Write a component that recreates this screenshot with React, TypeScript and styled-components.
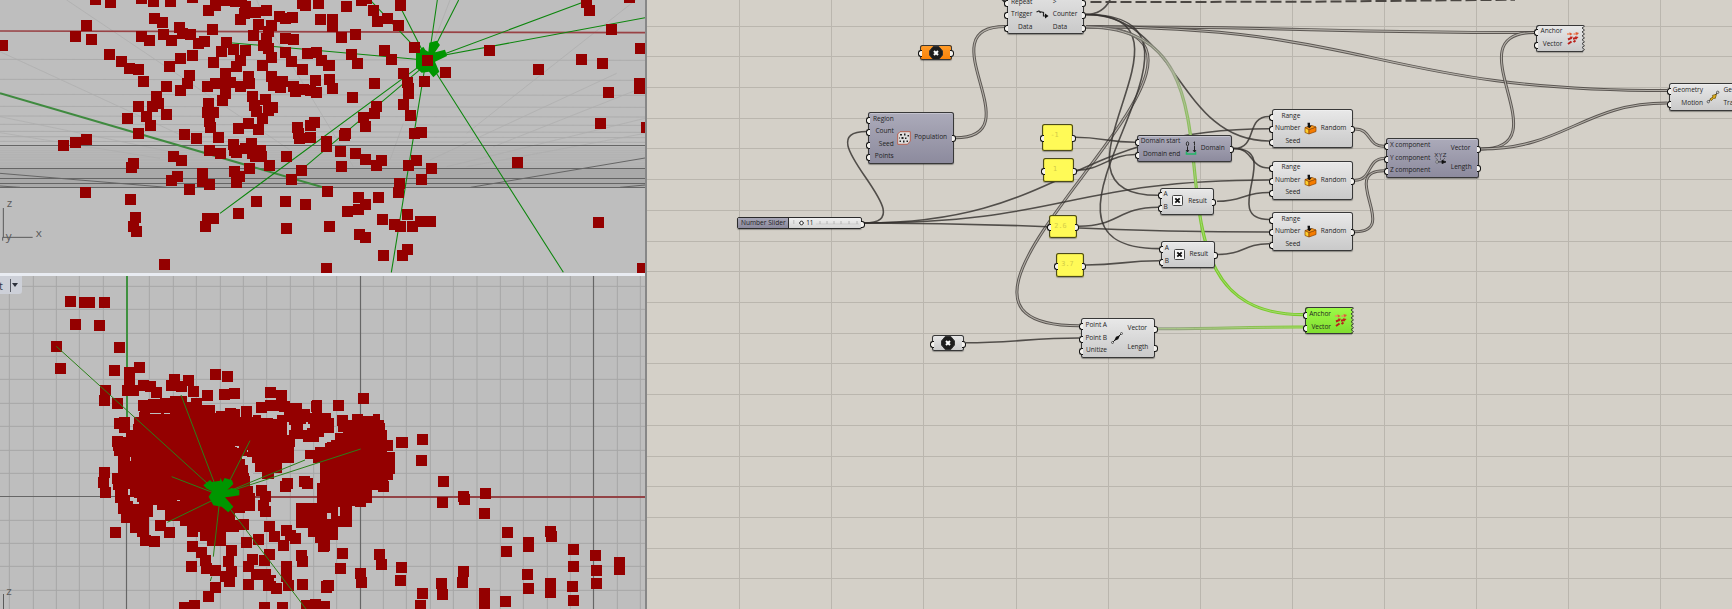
import React from 'react';
import styled, { createGlobalStyle, css } from 'styled-components';

const Global = createGlobalStyle`
  * { box-sizing: border-box; }
  html, body { margin: 0; padding: 0; overflow: hidden; }
  body { font-family: "Open Sans", "Noto Sans", sans-serif; }
`;

const Screen = styled.div`
  display: flex;
  width: 1732px;
  height: 609px;
  overflow: hidden;
  background: #d4d0c8;
`;

const Viewports = styled.div`
  display: flex;
  flex-direction: column;
  width: 647px;
  flex: none;
  border-right: 2px solid #878787;
  background: #e9ecf2;
  gap: 3px;
`;

const Viewport = styled.div<{ $h: number }>`
  position: relative;
  height: ${(p) => p.$h}px;
  flex: none;
  background: #bebebe;
  overflow: hidden;
  svg { display: block; }
`;

const ViewTag = styled.div`
  position: absolute;
  left: 0;
  top: 0;
  display: flex;
  align-items: center;
  width: 22px;
  height: 18px;
  background: #cdd0d8;
  border-radius: 0 0 3px 0;
  font-size: 11px;
  color: #333a48;
`;
const TagText = styled.span`
  width: 11px;
  margin-left: -1px;
`;
const TagArrow = styled.span`
  height: 13px;
  border-left: 1px solid #565a64;
  display: flex;
  align-items: center;
  padding-left: 1px;
  &::after {
    content: "";
    border: 3.5px solid transparent;
    border-top: 4px solid #2c303a;
    border-bottom: 0;
  }
`;

const Canvas = styled.div`
  position: relative;
  flex: 1;
  height: 609px;
  overflow: hidden;
  background: #d4d0c8;
`;

/* Origin of the canvas inside the window; node positions are in window units. */
const OX = 647;

const Wires = styled.svg`
  position: absolute;
  inset: 0;
`;

type Tone = 'plain' | 'dark' | 'green' | 'orange';
const tones: Record<Tone, string> = {
  plain: 'linear-gradient(#e9e9e9, #c9c9c9)',
  dark: 'linear-gradient(#acabba, #8c8a9d)',
  green: 'linear-gradient(#9dfb48, #80dc30)',
  orange: 'linear-gradient(#ff9c2a, #f98208)',
};

const port = css`
  content: "";
  position: absolute;
  top: 50%;
  width: 3px;
  height: 5px;
  margin-top: -2.3px;
  background: #f4f2ee;
  border: 1px solid #111;
`;

const NodeBox = styled.div<{ $x: number; $y: number; $w: number; $h: number; $tone: Tone; $cut?: boolean; $in: number }>`
  position: absolute;
  left: ${(p) => p.$x - OX}px;
  top: ${(p) => p.$y}px;
  width: ${(p) => p.$w}px;
  height: ${(p) => p.$h}px;
  display: grid;
  grid-template-columns: ${(p) => p.$in}px 20.5px 1fr;
  padding: 0.5px 0 1px;
  background: ${(p) => tones[p.$tone]};
  box-shadow: inset 0 0 0 1px #383838, inset 0 2px 0 rgba(255, 255, 255, 0.3), 0 1px 1px rgba(0, 0, 0, 0.35);
  border-radius: 2.5px;
  ${(p) =>
    p.$cut &&
    css`
      border-radius: 2.5px 0 0 2.5px;
      box-shadow: inset 1px 1px 0 #383838, inset 0 -1px 0 #383838, 0 1px 1px rgba(0, 0, 0, 0.25);
    `}
`;

const Column = styled.div`
  display: flex;
  flex-direction: column;
`;
const PortRow = styled.div<{ $side: 'in' | 'out' }>`
  position: relative;
  flex: 1;
  display: flex;
  align-items: center;
  justify-content: ${(p) => (p.$side === 'in' ? 'flex-end' : 'flex-start')};
  font-size: 6.6px;
  line-height: 1;
  letter-spacing: -0.05px;
  white-space: nowrap;
  color: #1f1f1f;
  &::after {
    ${port}
    ${(p) =>
      p.$side === 'in'
        ? 'left: -2.3px; border-right: 0; border-radius: 3px 0 0 3px;'
        : 'right: -2.3px; border-left: 0; border-radius: 0 3px 3px 0;'}
  }
`;
const IconCell = styled.div<{ $shift: number }>`
  display: flex;
  align-items: center;
  justify-content: center;
  padding-top: ${(p) => p.$shift * 2}px;
  svg { display: block; overflow: visible; }
`;

const Jag = styled.svg`
  position: absolute;
  right: -2px;
  top: 0;
`;

const Param = styled.div<{ $x: number; $y: number; $w: number; $h: number; $tone: Tone }>`
  position: absolute;
  left: ${(p) => p.$x - OX}px;
  top: ${(p) => p.$y}px;
  width: ${(p) => p.$w}px;
  height: ${(p) => p.$h}px;
  display: flex;
  align-items: center;
  justify-content: center;
  border-radius: 2.5px;
  background: ${(p) => tones[p.$tone]};
  box-shadow: inset 0 0 0 1px #383838, 0 1px 1px rgba(0, 0, 0, 0.3);
  &::before { ${port} left: -2.5px; border-right: 0; border-radius: 3px 0 0 3px; }
  &::after { ${port} right: -2.5px; border-left: 0; border-radius: 0 3px 3px 0; }
`;

const Panel = styled(Param)`
  background: #fffa57;
  box-shadow: inset 0 0 0 1px #4b4a1c, inset 0 0 0 1.6px #d8d240, 0 1px 1px rgba(0, 0, 0, 0.3);
  justify-content: flex-start;
  align-items: flex-start;
  padding: 7px 0 0 5px;
`;
const PanelText = styled.span<{ $pad: number }>`
  padding-left: ${(p) => p.$pad}px;
  font: 6.8px/8px "DejaVu Sans Mono", monospace;
  color: #d3cc48;
`;

const Slider = styled.div`
  position: absolute;
  left: ${737.3 - OX}px;
  top: 217.3px;
  width: 125.2px;
  height: 12.2px;
  display: flex;
  border: 1px solid #2b2b2b;
  border-radius: 2px;
  background: linear-gradient(#f0f0f0, #d6d6d6);
  box-shadow: 0 1px 1px rgba(0, 0, 0, 0.3);
  &::after { ${port} right: -3.3px; border-left: 0; border-radius: 0 3px 3px 0; }
`;
const SliderName = styled.div`
  flex: none;
  width: 51px;
  display: flex;
  align-items: center;
  justify-content: center;
  font-size: 6.6px;
  line-height: 1;
  white-space: nowrap;
  background: linear-gradient(#a6a5b5, #8c8a9d);
  border-right: 1px solid #2b2b2b;
  color: #1f1f1f;
`;
const SliderTrack = styled.div`
  flex: 1;
  min-width: 0;
  display: flex;
  align-items: center;
  padding-left: 4px;
  gap: 2.5px;
  svg { flex: none; }
`;
const SliderValue = styled.span`
  width: 7px;
  flex: none;
  font-size: 6.4px;
  line-height: 1;
  letter-spacing: -0.3px;
  color: #222;
`;

/* ---- point clouds: flat x,y lists in thirds of a pixel ---- */
const squares = (a: number[]) => {
  let d = '';
  for (let i = 0; i < a.length; i += 2) d += `M${a[i] - 16.5} ${a[i + 1] - 16.5}h33v33h-33z`;
  return d;
};

const RED = '#940000';
const GREEN = '#009600';

const topLeft = [
  286,-2,331,8,258,76,226,109,274,118,7,136,328,163,364,184,388,205,415,208,430,244,424,-5,460,4,511,4,577,-9,463,55,487,67,
  538,82,424,109,448,121,489,103,514,120,548,100,571,103,595,130,613,125,637,88,626,31,645,15,660,2,685,2,705,4,725,5,735,20,
  733,40,721,58,766,37,799,31,838,49,877,52,855,55,775,73,760,106,815,76,805,95,800,115,790,135,805,145,815,172,787,195,
  857,115,880,118,857,157,874,184,907,208,922,160,949,157,964,180,985,195,907,10,916,16,955,10,961,58,680,127,664,154,700,148,
  736,151,721,180,710,199,640,187,542,174,577,166,508,199,568,226,562,250,541,271,499,259,469,289,475,310,456,318,438,350,
  451,376,415,319,382,355,499,343,415,400,258,418,226,427,190,436,400,490,394,502,520,469,544,481,532,529,514,541,553,403,
  589,415,655,412,607,520,607,545,628,553,568,568,256,577,391,598,406,652,400,680,409,694,493,793,676,220,622,259,645,250,
  670,250,690,248,720,258,745,229,747,250,675,280,667,300,625,310,622,337,640,337,628,365,631,382,757,289,763,315,770,335,
  796,298,817,322,805,332,787,355,775,388,745,370,715,385,814,229,820,255,835,245,847,245,840,262,880,258,885,275,910,268,
  949,277,930,270,892,382,898,415,895,400,930,412,930,376,943,367,628,451,661,460,700,433,704,452,710,457,735,445,755,430,
  757,460,781,450,784,469,765,470,808,496,748,505,859,469,904,511,874,538,703,514,718,530,709,547,769,604,715,640,856,604,
  916,613,859,685,622,655,640,655,616,680,
];
const topRight = [
  -5,10,79,19,125,2,140,-5,160,31,172,64,202,55,235,76,241,16,1,58,37,58,37,79,64,112,106,103,94,163,112,190,193,151,214,178,
  283,142,322,181,376,217,313,244,250,220,262,247,265,265,265,280,250,313,271,346,163,250,97,292,28,238,37,265,-11,157,4,180,
  28,196,-14,240,-12,277,169,319,163,340,130,352,136,379,76,400,73,407,19,424,19,440,61,454,106,460,136,478,184,481,169,496,
  64,499,283,400,304,397,289,481,265,496,334,505,304,538,238,550,235,577,22,574,115,592,136,613,115,628,82,634,175,592,187,658,
  28,679,118,703,136,712,262,643,223,673,241,680,277,680,301,664,331,664,262,748,247,766,190,766,19,805,508,151,655,208,
  784,178,847,190,874,88,808,31,799,8,928,-9,961,145,957,250,957,265,865,277,841,370,592,487,835,667,979,382,967,806,
];
const frontLeft = [
  211,94,253,97,268,97,313,97,226,163,298,166,169,229,358,232,181,295,343,301,388,306,418,292,316,361,313,390,352,400,359,460,
  372,458,372,471,352,513,358,540,313,607,309,637,316,667,352,625,346,787,388,330,382,361,400,361,430,345,450,350,469,367,
  523,328,515,345,545,350,565,331,580,364,622,376,646,313,682,318,673,373,703,370,811,367,844,376,785,412,810,406,835,406,
  740,424,888,418,948,409,690,430,665,440,625,420,590,400,430,405,852,410,
];
const frontMid = [
  76,547,238,547,212,527,307,590,334,608,345,630,304,649,350,655,375,660,425,600,415,635,425,665,418,695,405,680,376,712,
  355,739,283,772,313,766,468,577,505,568,538,529,553,558,590,540,600,555,615,565,580,585,487,628,475,648,538,613,523,630,
  475,703,498,672,525,672,540,690,535,705,560,715,590,650,590,680,595,705,637,703,633,617,638,634,708,710,714,706,523,772,
  577,772,648,765,703,768,675,763,757,610,751,655,812,670,815,697,700,588,585,410,591,400,643,395,652,400,525,440,520,465,
  527,485,515,420,460,522,166,572,193,574,307,544,
];
const frontRight = [
  181,499,202,525,207,567,207,595,190,650,140,680,122,693,80,720,78,753,35,793,10,829,244,516,248,517,307,508,304,571,370,634,
  367,697,430,679,433,688,496,670,493,730,562,787,559,844,625,817,625,829,691,784,694,799,760,838,826,856,760,889,898,877,
  898,898,829,901,829,940,757,949,760,991,691,940,691,967,625,955,622,913,430,904,427,937,493,970,493,1000,556,994,364,940,
  367,973,307,970,301,1006,244,892,241,931,178,853,184,883,121,910,124,937,67,850,61,895,25,946,19,952,13,1008,55,406,130,385,
  -10,409,13,448,25,470,68,451,113,448,70,468,135,475,
];

const shallow = [444, 451, 457, 463, 468, 473, 478, 482, 487, 491, 495, 499, 502];

const Perspective = () => (
  <svg width="645" height="274" viewBox="0 0 1935 822">
    <rect x="0" y="436" width="1935" height="69" fill="#bababa" />
    <rect x="0" y="505" width="1935" height="57" fill="#a9a9a9" />
    <g stroke="#acacac" strokeWidth="3" fill="none">
      {[178, 238, 283, 319, 348, 373, 394, 410, 424].map((y) => (
        <path key={y} d={`M0 ${y}L1935 ${y + 3}`} />
      ))}
      {shallow.map((y) => (
        <path key={y} d={`M0 ${y}H1935`} strokeWidth="2" stroke="#adadad" />
      ))}
      <path
        strokeWidth="2"
        d="M200 0L870 450M0 155L640 450M0 350L560 465M0 398L480 475M770 0L800 70L1060 500M1935 -22L1400 400M1850 220L1290 480M1935 355L1340 500M1935 400L1400 500M1350 0L1300 130M1210 370L1170 480M1930 262L1480 440"
      />
    </g>
    <g stroke="#656565" strokeWidth="3" fill="none">
      <path d="M0 436.500H1935M0 505.500H1935M0 535.500H1935M0 550.500H1935M0 562.500H1935" />
      <path d="M0 520L500 562M1412 562L1935 474M0 558L60 562M1860 562L1935 555" />
    </g>
    <path d="M0 93L1935 98" stroke="#994245" strokeWidth="5" />
    <path d="M0 280L968 562" stroke="#3f8a3f" strokeWidth="6" />
    <g stroke="#0d860d" strokeWidth="3.200" fill="none">
      <path d="M1282 181L660 640M1282 190L880 530M1282 181L1195 10M1282 181L1115 5M1290 150L1312 0M1300 150L1376 0M1282 181L1745 8M1282 175L1935 53M1290 190L1690 817M1275 200L1174 817M1282 181L690 128" />
    </g>
    <g transform="translate(960 0)">
      <path
        fill={GREEN}
        d="M328 128L350 122L360 135L345 157L375 149L381 168L345 185L358 215L340 232L327 215L305 218L288 203V160L310 140L316 150L325 155Z"
      />
    </g>
    <g fill={RED} shapeRendering="crispEdges">
      <path d={squares(topLeft)} />
      <g transform="translate(960 0)">
        <path d={squares(topRight)} />
      </g>
    </g>
    <path d="M10 624V712M8 712H98M8 712V722" stroke="#5a5a5a" strokeWidth="3" fill="none" />
    <g fill="#5a5a5a" fontFamily="Open Sans, sans-serif" fontSize="35">
      <text x="20" y="622">z</text>
      <text x="107" y="712">x</text>
      <text x="17" y="719">y</text>
    </g>
  </svg>
);

const minorX = [28, 100, 169, 238, 310, 448, 520, 589, 661, 730, 800, 871, 941, 1010, 1150, 1219, 1291, 1360, 1431, 1501, 1570, 1642, 1711, 1852, 1921];
const minorY = [49, 118, 190, 259, 328, 400, 469, 541, 610, 751, 820, 889, 961];

const Front = () => (
  <svg width="645" height="333" viewBox="0 18 1935 999">
    <path
      stroke="#a6a7a6"
      strokeWidth="3"
      d={minorX.map((x) => `M${x} 0V1017`).join('') + minorY.map((y) => `M0 ${y}H1935`).join('')}
    />
    <path stroke="#666666" strokeWidth="3.500" d="M1081.500 0V1017M1780.500 0V1017M379.500 500V1017M0 679.500H380" />
    <path stroke="#3f903f" strokeWidth="6" d="M381 0V503" />
    <path stroke="#934346" strokeWidth="6" d="M380 681H968M1110 681H1935" />
    <g fill={RED} shapeRendering="crispEdges">
      <path d={squares(frontLeft)} />
      <g transform="translate(270 240)">
        <path d="M150 150H175V147H210V143H240V138H290V155H335V165H375V188H430V178H450V200H490V195H512V205H550V208H560V195H582V170H600V160H635V178H660V188H665V150H696V190H722V205H732V250H702V262H688V275H640V268H615V290H611V340H575V370H552V388H515V365H495V340H487V322H465V335H475V370H480V408H490V430H495V484H465V490H435V510H448V545H408V587H352V572H330V545H290V528H270V512H225V480H200V465H190V502H176V560H142V550H120V520H92V492H85V460H76V420H68V370H84V302H70V260H108V240H130V222H133V200H148Z" />
        <path d={squares(frontMid)} />
      </g>
      <path d="M915 540H945V530H975V510H1005V488H1030V470H1045V450H1060V438H1120V432H1140V450H1153V460H1155V480H1162V545H1185V612H1180V630H1165V645H1150V660H1116V698H1085V708H1055V740H1030V770H1015V810H990V843H955V820H945V800H925V775H888V700H950V640H960V580H940V567H915Z" />
      <g transform="translate(960 0)">
        <path d={squares(frontRight)} />
      </g>
    </g>
    <g transform="translate(270 240)" shapeRendering="crispEdges" fill="#bebebe">
      <path d="M590 216H597V225H603V240H598V256H590ZM618 278H632V285H660V289H642V293H618ZM640 222H660V234H652V240H640ZM435 287H448V293H440V290H435ZM181 190H212V193H181ZM222 189H240V192H222ZM115 418H119V436H115ZM120 440H132V444H140V457H146V463H128V452H120ZM208 482H214V500H208ZM455 318H470V323H478V345H482V368H490V402H483V378H476V345H465V328H455ZM120 322H124V333H120ZM710 488H722V507H710ZM745 470H750V498H745ZM700 265H724V275H712V279H700ZM648 217H655V225H648ZM552 683H570V697H560V692H552ZM260 451H270V454H260ZM470 300H475V305H470Z" />
    </g>
    <g transform="translate(270 240)">
      <g stroke="#2b8018" strokeWidth="3" fill="none">
        <path d="M385 430L-101 -11M385 430L273 135M400 430L480 272M395 432L812 297M400 430L645 330M380 432L245 380M380 445L232 517M388 460L370 620M365 680L361 693M400 450L648 777" />
      </g>
      <path
        fill={GREEN}
        d="M340 406L360 390L366 396L390 392L392 384L397 396L404 384L426 391L430 402L412 420L425 414L448 420V436L420 440L405 442L430 470L415 487L395 470L370 466L356 440L366 424L350 416Z"
      />
    </g>
    <path d="M10.500 972V1017" stroke="#5a5a5a" strokeWidth="3" />
    <text x="19" y="974" fill="#5a5a5a" fontFamily="Open Sans, sans-serif" fontSize="35">z</text>
  </svg>
);

/* ---- wires ---- */
type Pt = [number, number];
const curve = ([x0, y0]: Pt, [x1, y1]: Pt, d: number) => `M${x0} ${y0}C${x0 + d} ${y0} ${x1 - d} ${y1} ${x1} ${y1}`;

const single: string[] = [
  curve([864, 223], [867, 131.5], 66),
  curve([864, 223], [1269, 128.8], 200),
  curve([864, 223], [1269, 180], 200),
  curve([864, 223], [1269, 232], 200),
  curve([1075, 137.3], [1135, 142.3], 28),
  curve([1076, 170.3], [1135, 154.5], 26),
  curve([1079, 226.3], [1158, 207.3], 40),
  curve([1086, 265], [1159, 260.8], 36),
  curve([1234, 148.5], [1269, 116.5], 24),
  curve([1234, 148.5], [1269, 168], 20),
  curve([1234, 148.5], [1269, 219.5], 50),
  curve([1217, 201.3], [1269, 192.5], 26),
  curve([1218, 254.5], [1269, 243.8], 26),
  curve([1086, 14.5], [1269, 141], 92),
  curve([1086, 14.5], [1158, 195.3], 131),
  curve([1086, 14.5], [1159, 248.6], 168),
  curve([966, 342.8], [1079, 338], 45),
  'M1086 14.500C1098 14.500 1106 9 1111 -2',
];
const double: string[] = [
  curve([955, 137.8], [1005, 26.6], 81),
  curve([1355, 129], [1384, 146.3], 17),
  curve([1355, 180.3], [1384, 158.4], 17),
  curve([1355, 231.8], [1384, 170.7], 46),
  curve([1086, 26.8], [1079, 325.8], 218),
  curve([1086, 26.8], [1534, 32.5], 220),
  curve([1086, 26.8], [1667, 90.5], 290),
  curve([1481, 149], [1534, 32.5], 84),
  curve([1481, 149], [1667, 103], 84),
];
const anchorWire = curve([1086, 26.8], [1303, 314.7], 188);
const vectorWire = 'M1157 328.700C1210 328.700 1250 326.900 1303 327.100';

const gridX = [739.5, 831.5, 923.5, 1016.5, 1108.5, 1200.5, 1292.5, 1384.5, 1476.5, 1568.5, 1660.5];
const gridY = [26.5, 56.5, 87.5, 118.5, 148.5, 179.5, 210.5, 241.5, 271.5, 302.5, 333.5, 363.5, 394.5, 425.5, 456.5, 486.5, 517.5, 548.5, 578.5];

const WireLayer = () => (
  <Wires width={1732 - OX} height={609} viewBox={`${OX} 0 ${1732 - OX} 609`}>
    <defs>
      <linearGradient id="fall" gradientUnits="userSpaceOnUse" x1="1130" y1="26" x2="1200" y2="240">
        <stop offset="0" stopColor="#6a6662" />
        <stop offset="0.25" stopColor="#9aa38a" />
        <stop offset="0.45" stopColor="#8dbd62" />
        <stop offset="1" stopColor="#7acb2c" />
      </linearGradient>
      <linearGradient id="fallCore" gradientUnits="userSpaceOnUse" x1="1130" y1="26" x2="1200" y2="240">
        <stop offset="0" stopColor="#b5b1aa" />
        <stop offset="1" stopColor="#a5da70" />
      </linearGradient>
      <linearGradient id="run" gradientUnits="userSpaceOnUse" x1="1157" y1="0" x2="1303" y2="0">
        <stop offset="0" stopColor="#8f9884" />
        <stop offset="1" stopColor="#7ad022" />
      </linearGradient>
    </defs>
    <path
      stroke="#bab6ae"
      d={gridX.map((x) => `M${x} 0V609`).join('') + gridY.map((y) => `M${OX} ${y}H1732`).join('')}
    />
    <g fill="none">
      {double.map((d, i) => (
        <g key={i}>
          <path d={d} stroke="#45413d" strokeWidth="3" opacity="0.85" />
          <path d={d} stroke="#b3afa8" strokeWidth="1.100" />
        </g>
      ))}
      {single.map((d, i) => (
        <path key={i} d={d} stroke="#35312e" strokeWidth="1.600" opacity="0.82" />
      ))}
      <path d={anchorWire} stroke="url(#fall)" strokeWidth="3.200" />
      <path d={anchorWire} stroke="url(#fallCore)" strokeWidth="1" />
      <path d={vectorWire} stroke="url(#run)" strokeWidth="3" opacity="0.9" />
      <path d={vectorWire} stroke="#b0d488" strokeWidth="0.800" />
      <path d="M1090.500 2L1300 1.800L1515 -0.300" stroke="#4b4743" strokeWidth="2" strokeDasharray="11 4" />
      <path d="M1005 2L1001 -2" stroke="#333" strokeWidth="2" />
    </g>
  </Wires>
);

/* ---- icons ---- */
const PopulationIcon = () => (
  <svg width="14" height="14" viewBox="0 0 14 14">
    <path d="M3 .7H13.300V10L10.500 13.300H.7V3Z" fill="#dedede" stroke="#b8604f" />
    <g fill="#222">
      <path d="M3 3h2v1.500H3zM7 2.500h1.500v2H7zM10.500 4h1.500v1.500h-1.500zM4.500 6h2v2h-2zM8 6.500h1.500V8H8zM2.500 9.500H4V11H2.500zM6 9.500h1.500v2H6zM9.500 9.500h1.500V11H9.500zM2 6.500h1v1H2z" />
    </g>
  </svg>
);
const RandomIcon = () => (
  <svg width="13" height="13" viewBox="0 0 13 13">
    <path d="M1 5.500L5 7.500V12L1 10.500Z" fill="#ffcf30" stroke="#8a4300" strokeWidth=".7" />
    <path d="M5 7.500L12 5V9.500L5 12Z" fill="#f57c00" stroke="#8a4300" strokeWidth=".7" />
    <path d="M1 5.500L8 3.500L12 5L5 7.500Z" fill="#ff9d1c" stroke="#8a4300" strokeWidth=".7" />
    <path d="M3.500 .8H6V3.500H7.800L5.500 6.300L2.800 4.500H3.800Z" fill="#111" />
  </svg>
);
const DomainIcon = () => (
  <svg width="12" height="14" viewBox="0 0 12 14">
    <path d="M1.500 10.500V13H10.500V10.500" fill="none" stroke="#22b567" strokeWidth="1.600" />
    <path d="M2.500 5.500V11M9.500 4.500V11M1 9L2.500 11L4 9M8 9L9.500 11L11 9" fill="none" stroke="#222" />
    <ellipse cx="2.500" cy="2.800" rx="1.200" ry="2" fill="none" stroke="#222" strokeWidth=".9" />
    <path d="M8.500 1.500L9.500 .8V4" fill="none" stroke="#222" strokeWidth=".9" />
  </svg>
);
const TimesIcon = () => (
  <svg width="11" height="11" viewBox="0 0 11 11">
    <rect x=".5" y=".5" width="10" height="10" rx="1" fill="#f8f8f8" stroke="#444" />
    <path d="M3.300 3.300L7.700 7.700M7.700 3.300L3.300 7.700" stroke="#111" strokeWidth="1.800" />
  </svg>
);
const HexIcon = () => (
  <svg width="14" height="14" viewBox="0 0 14 14">
    <path d="M4.200 .5H9.800L13.500 5V9L9.800 13.500H4.200L.5 9V5Z" fill="#1d1d1d" stroke="#333" />
    <path d="M5 5L9 9M9 5L5 9" stroke="#fff" strokeWidth="2" />
  </svg>
);
const TwoPointIcon = () => (
  <svg width="12" height="12" viewBox="0 0 12 12">
    <path d="M1.500 10.500L10.500 1.500" stroke="#222" />
    <path d="M3 9L5 4.800L9 3.200L7.200 7.200Z" fill="#111" />
    <circle cx="1.500" cy="10.500" r="1" fill="#ddd" stroke="#333" strokeWidth=".7" />
    <circle cx="10.500" cy="1.500" r="1" fill="#ddd" stroke="#333" strokeWidth=".7" />
  </svg>
);
const MoveIcon = () => (
  <svg width="12" height="12" viewBox="0 0 12 12">
    <path d="M1.500 10.500L10.500 1.500" stroke="#444" />
    <path d="M2.800 8L6 6L5.400 4.400L9.500 3.200L8.200 7.500L6.800 7L4.200 9.800Z" fill="#e8b51c" stroke="#5f4600" strokeWidth=".7" />
    <circle cx="1.300" cy="10.700" r="1.200" fill="#ddd" stroke="#333" strokeWidth=".7" />
    <circle cx="10.700" cy="1.300" r="1.200" fill="#ddd" stroke="#333" strokeWidth=".7" />
  </svg>
);
const XyzIcon = () => (
  <svg width="13" height="14" viewBox="0 0 13 14">
    <text x="6.500" y="5.500" textAnchor="middle" fontFamily="Liberation Sans, sans-serif" fontSize="6" fill="#26262c" letterSpacing=".3">XYZ</text>
    <path d="M1.500 7L4 9M6.500 6.500V9M11 7L9 9" stroke="#444" strokeWidth=".6" />
    <path d="M2 9.800H4V12H2Z" fill="#ddd" stroke="#333" strokeWidth=".5" />
    <path d="M4 10.900H8V9.200L12 10.900L8 12.600V10.900" fill="#111" stroke="#111" strokeWidth=".8" />
  </svg>
);
const ArrowsIcon = () => (
  <svg width="12" height="13" viewBox="0 0 12 13">
    <path d="M0 2H3.500M6.500 2H9" stroke="#f08a63" strokeWidth="1.400" />
    <path d="M2.500 .3L5.500 2L3 3.600ZM8.500 0L12 1L9.500 3.400Z" fill="#dd5b35" />
    <path d="M1 7.500L4.500 5.800M6 6.800L9 6M1 12L4.500 9.500M6.500 10L8.500 8.500" stroke="#b9201b" strokeWidth="2" />
    <path d="M3 4.500L6 4.800L4 7.500ZM8 4.300L11.500 5L9 7.800Z" fill="#c4201a" />
  </svg>
);
const CounterIcon = () => (
  <svg width="13" height="9" viewBox="0 0 13 9">
    <path d="M.5 2L3 1L4.500 3M3.500 1.500L7.500 2.500V6H10" fill="none" stroke="#222" strokeWidth="1.200" />
    <path d="M9 3.500L12.500 6L9 8.500Z" fill="#111" />
  </svg>
);

interface NodeProps {
  x: number;
  y: number;
  w: number;
  h: number;
  split: number;
  tone?: Tone;
  inputs: string[];
  outputs?: string[];
  icon: React.ReactNode;
  iconShift?: number;
  cut?: boolean;
}

const Node = ({ x, y, w, h, split, tone = 'plain', inputs, outputs = [], icon, iconShift = 0, cut }: NodeProps) => (
  <NodeBox $x={x} $y={y} $w={w} $h={h} $in={split} $tone={tone} $cut={cut}>
    <Column>
      {inputs.map((t, i) => (
        <PortRow key={i} $side="in">{t}</PortRow>
      ))}
    </Column>
    <IconCell $shift={iconShift}>{icon}</IconCell>
    <Column>
      {outputs.map((t, i) => (
        <PortRow key={i} $side="out">{t}</PortRow>
      ))}
    </Column>
    {cut && (
      <Jag width="4" height={h} viewBox={`0 0 4 ${h}`}>
        <path
          d={'M2 0' + Array.from({ length: 7 }, (_, i) => `L3.500 ${i * 3.9 + 1.2}L1 ${i * 3.9 + 3}`).join('') + `L3 ${h}`}
          fill={tone === 'green' ? '#8eea3c' : '#d4d4d4'}
          stroke="#333"
          strokeWidth=".9"
        />
      </Jag>
    )}
  </NodeBox>
);

const SliderHandle = () => (
  <svg width="5" height="6" viewBox="0 0 5 6">
    <path d="M2.500 .8L4.600 3L2.500 5.200L.4 3Z" fill="#fff" stroke="#111" strokeWidth="1" />
  </svg>
);

const panels = [
  { x: 1042, y: 124.3, w: 31, h: 26.4, text: '-1', pad: 3.5 },
  { x: 1043, y: 158.3, w: 31, h: 23.5, text: '1', pad: 5 },
  { x: 1049.3, y: 214.7, w: 27.6, h: 23.7, text: '2.6', pad: 0 },
  { x: 1056.3, y: 253.3, w: 27.6, h: 23.5, text: '3.7', pad: 0 },
];

const App = () => (
  <Screen>
    <Global />
    <Viewports>
      <Viewport $h={273}>
        <Perspective />
      </Viewport>
      <Viewport $h={333}>
        <Front />
        <ViewTag>
          <TagText>t</TagText>
          <TagArrow />
        </ViewTag>
      </Viewport>
    </Viewports>
    <Canvas>
      <WireLayer />
      <Node x={1006.7} y={-16.8} w={77.5} h={51.2} split={25.6} inputs={['', 'Repeat', 'Trigger', 'Data']} outputs={['', '>', 'Counter', 'Data']} icon={<CounterIcon />} iconShift={5.5} />
      <Param $x={920} $y={45} $w={31.7} $h={15.3} $tone="orange"><HexIcon /></Param>
      <Param $x={932.3} $y={335.3} $w={31.7} $h={15.4} $tone="plain"><HexIcon /></Param>
      <Node x={868.3} y={112.3} w={85.7} h={51.4} split={25.4} tone="dark" inputs={['Region', 'Count', 'Seed', 'Points']} outputs={['Population']} icon={<PopulationIcon />} />
      <Slider>
        <SliderName>Number Slider</SliderName>
        <SliderTrack>
          <svg width="3" height="12" viewBox="0 0 3 12">
            <path d="M.8 3V7" stroke="#bbb" />
          </svg>
          <SliderHandle />
          <SliderValue>11</SliderValue>
          <svg width="44" height="12" viewBox="0 0 44 12">
            <path d="M0 7H43" stroke="#c4c4c4" strokeWidth=".6" />
            <path d="M4 4V7M11 4V7M18 4V7M25 4V7M33 4V7M41 4V7" stroke="#a8a8a8" strokeWidth=".8" />
          </svg>
        </SliderTrack>
      </Slider>
      {panels.map((p) => (
        <Panel key={p.text} $x={p.x} $y={p.y} $w={p.w} $h={p.h} $tone="plain">
          <PanelText $pad={p.pad}>{p.text}</PanelText>
        </Panel>
      ))}
      <Node x={1137.3} y={134.7} w={94.4} h={27} split={43} tone="dark" inputs={['Domain start', 'Domain end']} outputs={['Domain']} icon={<DomainIcon />} />
      <Node x={1160} y={187.7} w={54} h={27} split={7.7} inputs={['A', 'B']} outputs={['Result']} icon={<TimesIcon />} />
      <Node x={1161.3} y={241.3} w={54} h={27.2} split={7.7} inputs={['A', 'B']} outputs={['Result']} icon={<TimesIcon />} />
      {[109.3, 160.7, 212.3].map((y) => (
        <Node key={y} x={1271.7} y={y} w={81} h={39.2} split={28.6} inputs={['Range', 'Number', 'Seed']} outputs={['Random']} icon={<RandomIcon />} />
      ))}
      <Node x={1386.3} y={138.3} w={92.7} h={39.6} split={44} tone="dark" inputs={['X component', 'Y component', 'Z component']} outputs={['Vector', 'Length']} icon={<XyzIcon />} />
      <Node x={1081} y={318.3} w={74.4} h={39.5} split={26} inputs={['Point A', 'Point B', 'Unitize']} outputs={['Vector', 'Length']} icon={<TwoPointIcon />} />
      <Node x={1305.3} y={307.3} w={46.5} h={27} split={25.7} tone="green" cut inputs={['Anchor', 'Vector']} icon={<ArrowsIcon />} />
      <Node x={1536.3} y={24.5} w={46.5} h={27.5} split={26} cut inputs={['Anchor', 'Vector']} icon={<ArrowsIcon />} />
      <Node x={1669.3} y={83.3} w={92} h={27.3} split={33.7} inputs={['Geometry', 'Motion']} outputs={['Geometry', 'Transform']} icon={<MoveIcon />} />
    </Canvas>
  </Screen>
);

export default App;
